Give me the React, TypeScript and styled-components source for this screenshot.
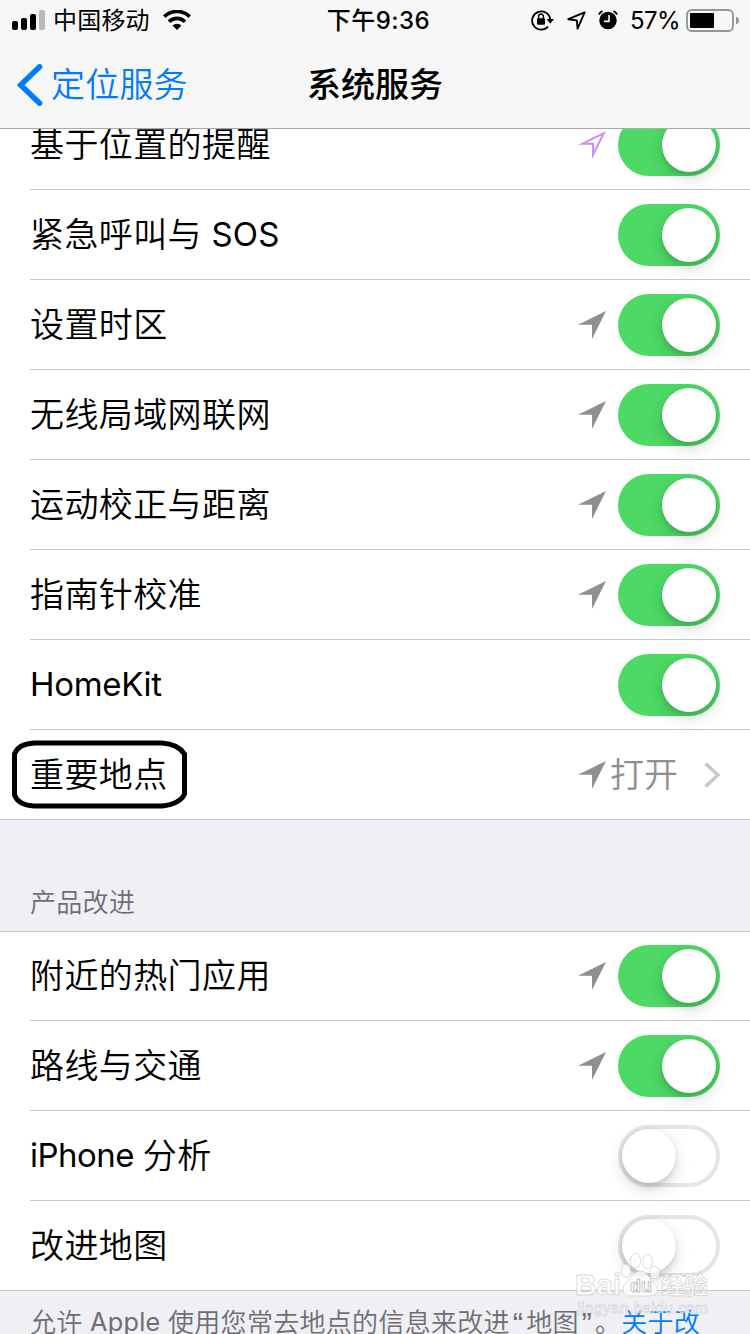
import React from 'react';
import styled, { createGlobalStyle } from 'styled-components';

const GlobalStyle = createGlobalStyle`
  * { box-sizing: border-box; }
  html, body { margin: 0; padding: 0; overflow: hidden; }
  body {
    background: #efeff4;
    color: #000;
    font-family: Inter, "Noto Sans CJK SC", sans-serif;
    font-weight: 350;
    -webkit-font-smoothing: antialiased;
  }
`;

const Screen = styled.main`
  position: relative;
  display: flex;
  flex-direction: column;
  width: 750px;
  height: 1334px;
  overflow: hidden;
`;

const Header = styled.header`
  position: relative;
  z-index: 2;
  flex: none;
  height: 129px;
  background: #f7f7f7;
  border-bottom: 1px solid #a9a9ac;
`;

const StatusBar = styled.div`
  display: grid;
  grid-template-columns: 1fr auto 1fr;
  align-items: center;
  height: 40px;
  padding: 0 11px 0 12px;
  font-size: 24px;
  font-weight: 400;
  line-height: 38px;
  white-space: nowrap;
`;

const StatusLeft = styled.div`
  display: flex;
  align-items: center;
  height: 40px;
`;

const Carrier = styled.span`
  margin: 2px 13px 0 8px;
  letter-spacing: 0.2px;
`;

const Clock = styled.span`
  padding: 2px 0 0 6px;
  font-weight: 500;
  letter-spacing: 0.45px;
`;

const StatusRight = styled(StatusLeft)`
  justify-content: flex-end;
`;

const Percent = styled.span`
  margin: 2px 6px 0 12px;
  letter-spacing: -0.6px;
`;

const NavBar = styled.nav`
  display: grid;
  grid-template-columns: 1fr auto 1fr;
  align-items: center;
  height: 88px;
  padding: 0 17px;
  font-size: 34px;
  line-height: 88px;
`;

const Back = styled.a`
  display: flex;
  align-items: center;
  gap: 8px;
  color: #007aff;
`;

const BackText = styled.span`
  padding-top: 1px;
  letter-spacing: 0.2px;
`;

const Title = styled.h1`
  margin: 0;
  padding-top: 1px;
  font-size: 34px;
  font-weight: 500;
`;

const Group = styled.section<{ $scrolled?: boolean }>`
  flex: none;
  margin-top: ${(p) => (p.$scrolled ? '-29px' : '0')};
  background: #fff;
`;

const Row = styled.div<{ $first?: boolean; $last?: boolean }>`
  display: flex;
  height: ${(p) => (p.$first ? 89 : 90)}px;
  padding-left: ${(p) => (p.$last ? 0 : 30)}px;
  border-bottom: ${(p) => (p.$last ? '1px solid #c8c7cc' : '0')};
`;

const RowBody = styled.div<{ $first?: boolean; $last?: boolean }>`
  display: flex;
  flex: 1;
  align-items: flex-start;
  padding: ${(p) => (p.$first ? 13 : 14)}px 30px 0 ${(p) => (p.$last ? 30 : 0)}px;
  border-bottom: ${(p) => (p.$last ? '0' : '1px solid #c8c7cc')};
`;

const Label = styled.span`
  flex: 1;
  font-size: 34px;
  line-height: 62px;
  letter-spacing: 0.4px;
`;

const Latin = styled.span<{ $tracking: number }>`
  font-size: 0.97em;
  font-weight: 400;
  line-height: 1;
  vertical-align: 1px;
  letter-spacing: ${(p) => p.$tracking}px;
`;

const ArrowSlot = styled.span`
  display: flex;
  align-items: center;
  height: 62px;
  margin-right: 12px;
`;

const Track = styled.span<{ $on: boolean }>`
  display: flex;
  flex: none;
  justify-content: ${(p) => (p.$on ? 'flex-end' : 'flex-start')};
  width: 102px;
  height: 62px;
  padding: ${(p) => (p.$on ? 4 : 0)}px;
  border: ${(p) => (p.$on ? '0' : '4px solid #e5e5e5')};
  border-radius: 31px;
  background: ${(p) => (p.$on ? '#4cd964' : '#fff')};
`;

const Knob = styled.span`
  width: 54px;
  height: 54px;
  border-radius: 50%;
  background: #fff;
  box-shadow: 0 6px 16px rgba(0, 0, 0, 0.15), 0 5px 4px rgba(0, 0, 0, 0.07), 0 0 2px rgba(0, 0, 0, 0.1);
`;

const Detail = styled.span`
  display: flex;
  align-items: center;
  height: 62px;
  color: #8e8e93;
  font-size: 34px;
  line-height: 62px;
`;

const DetailText = styled.span`
  margin: 0 26px 0 4px;
`;

const Highlighted = styled.span`
  position: relative;
`;

const Ring = styled.svg`
  position: absolute;
  left: -18px;
  top: -14px;
`;

const GroupTitle = styled.h2`
  flex: none;
  height: 112px;
  margin: 0;
  padding: 64px 30px 0;
  border-bottom: 1px solid #c8c7cc;
  color: #6d6d72;
  font-size: 26px;
  font-weight: 350;
  line-height: 38px;
  letter-spacing: 0.3px;
`;

const Footnote = styled.p`
  flex: none;
  display: flex;
  margin: 0;
  padding: 13px 30px 0;
  color: #6d6d72;
  font-size: 26px;
  line-height: 38px;
  letter-spacing: 0.3px;
  text-spacing-trim: space-all;
  white-space: nowrap;
`;

const Quote = styled.span`
  margin: 0 2.8px;
  font-family: "Liberation Sans", sans-serif;
  font-size: 31px;
  line-height: 1;
  vertical-align: -3px;
`;

const More = styled.a`
  color: #007aff;
`;

const Watermark = styled.svg`
  position: absolute;
  left: 570px;
  top: 1245px;
  z-index: 3;
`;

const Signal = () => (
  <svg width="33" height="20" viewBox="0 0 33 20">
    <rect x="0" y="11" width="6" height="9" rx="2" />
    <rect x="9" y="8" width="6" height="12" rx="2" />
    <rect x="18" y="4" width="6" height="16" rx="2" />
    <rect x="27" y="0" width="6" height="20" rx="2" fill="#b9b9b9" />
  </svg>
);

const Wifi = () => (
  <svg width="28" height="20" viewBox="0 0 28 20">
    <path d="M1.3 7.2a18.2 18.2 0 0 1 25.4 0" fill="none" stroke="#000" strokeWidth="3.8" transform="translate(0 -.6)" />
    <path d="M6 12a11.4 11.4 0 0 1 16 0" fill="none" stroke="#000" strokeWidth="3.6" transform="translate(0 -.3)" />
    <path d="M9.5 15.6a6.4 6.4 0 0 1 9 0L14 20z" />
  </svg>
);

const RotationLock = () => (
  <svg width="24" height="22" viewBox="0 0 24 22">
    <path d="M17 17.6A9.1 9.1 0 1 1 19.2 10" fill="none" stroke="#000" strokeWidth="1.8" />
    <path d="M15.6 10h7.4l-3.8 4.8z" />
    <rect x="6" y="9.2" width="8" height="6.6" rx="1" />
    <path d="M7.6 10V7.5a2.4 2.4 0 0 1 4.8 0V10" fill="none" stroke="#000" strokeWidth="1.5" />
  </svg>
);

const StatusArrow = () => (
  <svg width="19" height="19" viewBox="0 0 19 19">
    <path d="M17.6 1.4L1.3 8.2l8.5 1.2.8 8.2z" fill="none" stroke="#000" strokeWidth="1.9" strokeLinejoin="round" />
  </svg>
);

const Alarm = () => (
  <svg width="20" height="20" viewBox="0 0 20 20">
    <circle cx="10" cy="10.5" r="8.7" />
    <path d="M.9 4.6Q1.8 2 4.6 1.1M19.1 4.6Q18.2 2 15.4 1.1" fill="none" stroke="#000" strokeWidth="1.7" />
    <path d="M11 5v6.4H6" fill="none" stroke="#f7f7f7" strokeWidth="1.6" />
  </svg>
);

const Battery = () => (
  <svg width="53" height="24" viewBox="0 0 53 24">
    <rect x="1" y="2" width="46" height="21" rx="4.5" fill="none" stroke="#969696" strokeWidth="1.9" />
    <rect x="4" y="5" width="24" height="15" rx="1" />
    <path d="M50 8.5q3 1.2 3 4t-3 4z" fill="#969696" />
  </svg>
);

const StatusGap = styled.span`
  width: 12px;
`;

const arrowShape = 'M28 0L0 13.8h14V28z';

const LocationArrow = ({ outlined = false }: { outlined?: boolean }) => (
  <svg width="28" height="28" viewBox="0 0 28 28">
    {outlined ? (
      <>
        <clipPath id="arrow-edge">
          <path d={arrowShape} />
        </clipPath>
        <path d={arrowShape} fill="none" stroke="#c88fff" strokeWidth="4" clipPath="url(#arrow-edge)" />
      </>
    ) : (
      <path d={arrowShape} fill="#8e8e93" />
    )}
  </svg>
);

const Toggle = ({ on }: { on: boolean }) => (
  <Track $on={on} role="switch" aria-checked={on}>
    <Knob />
  </Track>
);

type Arrow = 'filled' | 'outlined';
type Item = { key: string; label: React.ReactNode; arrow?: Arrow; on: boolean };

const services: Item[] = [
  { key: 'reminders', label: '基于位置的提醒', arrow: 'outlined', on: true },
  { key: 'sos', label: <>紧急呼叫与<Latin $tracking={0.2}> SOS</Latin></>, on: true },
  { key: 'timezone', label: '设置时区', arrow: 'filled', on: true },
  { key: 'wlan', label: '无线局域网联网', arrow: 'filled', on: true },
  { key: 'motion', label: '运动校正与距离', arrow: 'filled', on: true },
  { key: 'compass', label: '指南针校准', arrow: 'filled', on: true },
  { key: 'homekit', label: <Latin $tracking={-0.3}>HomeKit</Latin>, on: true },
];

const improvements: Item[] = [
  { key: 'popular', label: '附近的热门应用', arrow: 'filled', on: true },
  { key: 'routing', label: '路线与交通', arrow: 'filled', on: true },
  { key: 'analytics', label: <><Latin $tracking={-0.5}>iPhone </Latin>分析</>, on: false },
  { key: 'maps', label: '改进地图', on: false },
];

const ToggleRow = ({ item, first, last }: { item: Item; first?: boolean; last?: boolean }) => (
  <Row $first={first} $last={last}>
    <RowBody $first={first} $last={last}>
      <Label>{item.label}</Label>
      {item.arrow && (
        <ArrowSlot>
          <LocationArrow outlined={item.arrow === 'outlined'} />
        </ArrowSlot>
      )}
      <Toggle on={item.on} />
    </RowBody>
  </Row>
);

export default function App() {
  return (
    <Screen>
      <GlobalStyle />
      <Header>
        <StatusBar>
          <StatusLeft>
            <Signal />
            <Carrier>中国移动</Carrier>
            <Wifi />
          </StatusLeft>
          <Clock>下午9:36</Clock>
          <StatusRight>
            <RotationLock />
            <StatusGap />
            <StatusArrow />
            <StatusGap />
            <Alarm />
            <Percent>57%</Percent>
            <Battery />
          </StatusRight>
        </StatusBar>
        <NavBar>
          <Back>
            <svg width="26" height="42" viewBox="0 0 26 42">
              <path d="M22.6 2.8L3.6 21l19 18.2" fill="none" stroke="#007aff" strokeWidth="5.5" strokeLinecap="round" />
            </svg>
            <BackText>定位服务</BackText>
          </Back>
          <Title>系统服务</Title>
        </NavBar>
      </Header>

      <Group $scrolled>
        {services.map((item) => (
          <ToggleRow key={item.key} item={item} />
        ))}
        <Row $last>
          <RowBody $last>
            <Label>
              <Highlighted>
                重要地点
                <Ring width="176" height="70" viewBox="0 0 176 70">
                  <path
                    d="M22 3H150Q166 4 172.5 14V54Q168 64 150 66H22Q6 65 2.5 55V14Q6 4 22 3Z"
                    fill="none"
                    stroke="#000"
                    strokeWidth="5"
                  />
                </Ring>
              </Highlighted>
            </Label>
            <Detail>
              <LocationArrow />
              <DetailText>打开</DetailText>
              <svg width="16" height="26" viewBox="0 0 16 26">
                <path d="M1.5 1.5L14 13 1.5 24.5" fill="none" stroke="#c7c7cc" strokeWidth="3.5" />
              </svg>
            </Detail>
          </RowBody>
        </Row>
      </Group>

      <GroupTitle>产品改进</GroupTitle>
      <Group>
        {improvements.map((item, i) => (
          <ToggleRow key={item.key} item={item} first={i === 0} last={i === improvements.length - 1} />
        ))}
      </Group>
      <Footnote>
        <span>
          允许<Latin $tracking={0.3}> Apple </Latin>使用您常去地点的信息来改进<Quote>“</Quote>地图<Quote>”</Quote>。
        </span>
        <More>关于改</More>
      </Footnote>

      <Watermark width="150" height="75" viewBox="0 0 150 75">
        <g fill="#fff" fillOpacity="0.75" stroke="#c4c4c8" strokeOpacity="0.6" strokeWidth="1">
          <ellipse cx="56" cy="25.5" rx="4.8" ry="6.5" />
          <ellipse cx="65.5" cy="15.7" rx="5" ry="7.2" />
          <ellipse cx="77.5" cy="16.5" rx="5" ry="7" />
          <ellipse cx="84.8" cy="27.5" rx="4.8" ry="6.2" />
          <path d="M70 26c8 0 9 8 14 12 6 5 4 13-4 13-5 0-14 0-20 0-8 0-9-8-4-13 5-4 7-12 14-12z" />
          <text x="5" y="50" fontFamily="Liberation Sans" fontWeight="700" fontSize="30" textLength="46">Bai</text>
          <text x="60" y="47" fontFamily="Liberation Sans" fontWeight="700" fontSize="18" stroke="#999">du</text>
          <text x="91" y="49" fontFamily="Noto Sans CJK SC" fontWeight="700" fontSize="24" textLength="47">经验</text>
          <text x="7" y="68" fontFamily="Liberation Sans" fontSize="15.5" strokeWidth="0.8" textLength="131">jingyan.baidu.com</text>
        </g>
      </Watermark>
    </Screen>
  );
}
